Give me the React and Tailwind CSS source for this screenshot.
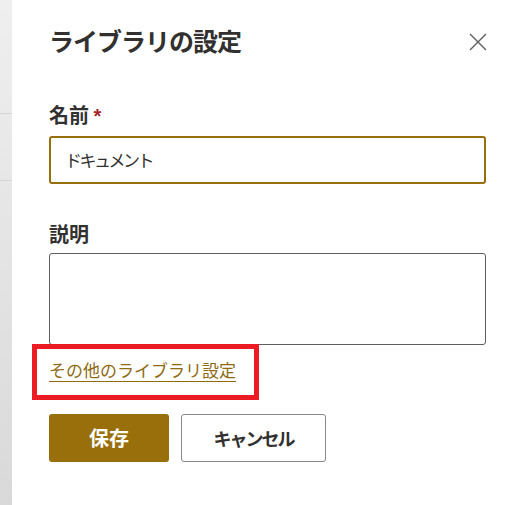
import React from 'react';

const jp = { fontFamily: '"Noto Sans CJK JP", "Noto Sans", sans-serif' };

export default function App() {
  return (
    <div className="flex h-[505px] w-[511px] overflow-hidden bg-white" style={jp}>
      {/* page behind the panel */}
      <div className="flex w-[12px] flex-col bg-gradient-to-b from-[#efefef] to-[#d9d9d9]">
        <div className="h-[113px]" />
        <div className="h-px bg-[#d6d6d6]" />
        <div className="h-[66px]" />
        <div className="h-px bg-[#d6d6d6]" />
      </div>

      <div className="flex flex-1 flex-col pl-[37px] pr-[25px] pt-[20px] text-[#323130]">
        <div className="flex h-[40px] items-center justify-between">
          <h1 className="text-[25px] font-bold leading-[40px] tracking-[-1px]">ライブラリの設定</h1>
          <button className="mr-[-2px] mt-[4px] flex h-[20px] w-[20px] items-center justify-center text-[#605e5c]">
            <svg width="18" height="18" viewBox="0 0 18 18" fill="none" stroke="currentColor" strokeWidth="1.4">
              <path d="M1 1L17 17M17 1L1 17" />
            </svg>
          </button>
        </div>

        <label className="mt-[43px] h-[24px] text-[20px] font-bold leading-[24px]">
          名前 <span className="text-[#a4262c]" style={{ fontFamily: '"Liberation Sans", sans-serif' }}>*</span>
        </label>
        <div className="mt-[9px] flex h-[48px] items-center rounded-[3px] border-2 border-[#986f0b] px-[14px]">
          <span className="text-[17px] tracking-[-2.5px]">ドキュメント</span>
        </div>

        <label className="mt-[38px] h-[24px] text-[20px] font-bold leading-[24px]">説明</label>
        <div className="mt-[7px] h-[92px] rounded-[3px] border border-[#605e5c]" />

        <div className="relative mt-[13px] h-[24px]">
          <a className="text-[17px] leading-[24px] text-[#8f6b12] underline underline-offset-[4px]" href="#">
            その他のライブラリ設定
          </a>
          <div className="absolute left-[-17px] top-[-14px] h-[56px] w-[227px] border-[5px] border-[#ed1c24]" />
        </div>

        <div className="mt-[32px] flex gap-[12px]">
          <button className="flex h-[48px] w-[120px] items-center justify-center rounded-[3px] bg-[#986f0b] text-[20px] font-bold text-white">
            保存
          </button>
          <button className="flex h-[48px] w-[145px] items-center justify-center rounded-[3px] border border-[#8a8886] bg-white text-[18px] font-bold tracking-[-2px] text-[#323130]">
            キャンセル
          </button>
        </div>
      </div>
    </div>
  );
}
